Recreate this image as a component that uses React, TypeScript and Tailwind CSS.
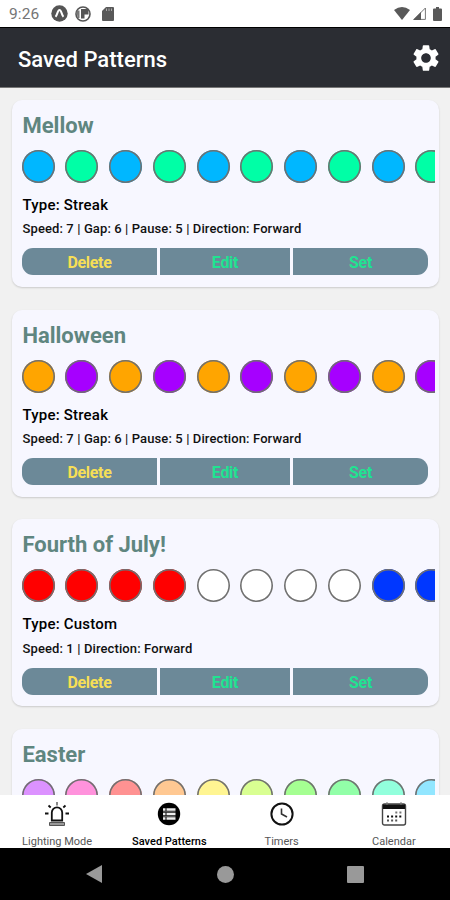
import clsx from 'clsx'
import { MdSettings } from 'react-icons/md'

interface Pattern {
  name: string
  type?: string
  details?: string
  colors: string[]
}

const patterns: Pattern[] = [
  {
    name: 'Mellow',
    type: 'Streak',
    details: 'Speed: 7 | Gap: 6 | Pause: 5 | Direction: Forward',
    colors: ['#00b7ff', '#00ffa6', '#00b7ff', '#00ffa6', '#00b7ff', '#00ffa6', '#00b7ff', '#00ffa6', '#00b7ff', '#00ffa6'],
  },
  {
    name: 'Halloween',
    type: 'Streak',
    details: 'Speed: 7 | Gap: 6 | Pause: 5 | Direction: Forward',
    colors: ['#ffa500', '#a600ff', '#ffa500', '#a600ff', '#ffa500', '#a600ff', '#ffa500', '#a600ff', '#ffa500', '#a600ff'],
  },
  {
    name: 'Fourth of July!',
    type: 'Custom',
    details: 'Speed: 1 | Direction: Forward',
    colors: ['#ff0000', '#ff0000', '#ff0000', '#ff0000', '#ffffff', '#ffffff', '#ffffff', '#ffffff', '#0037ff', '#0037ff'],
  },
  {
    name: 'Easter',
    colors: ['#dc92ff', '#ff92dc', '#ff9292', '#ffc892', '#fff592', '#d9ff92', '#a5ff92', '#92ffa8', '#92ffdc', '#92e6ff'],
  },
]

function StatusBar() {
  return (
    <div className="flex h-[27px] shrink-0 items-center bg-white pl-[9px] pr-2 text-[#5c5c5c]">
      <span className="w-[42px] pt-px text-[15.5px] leading-[27px] tracking-[0.1px] text-[#757575]">9:26</span>
      <svg className="h-[17px] w-[17px]" viewBox="0 0 17 17">
        <circle cx="8.5" cy="8.5" r="8.2" fill="#555" />
        <path d="M4.5 11.8c1.8-1.5 2-6.8 4-6.8s2.2 5.3 4 6.8" fill="none" stroke="#fff" strokeWidth="2" />
      </svg>
      <svg className="ml-[7px] h-4 w-4" viewBox="0 0 16 16">
        <circle cx="8" cy="8" r="7" fill="none" stroke="#555" strokeWidth="1.6" />
        <path d="M6 3h7.500v5.500H9.500v4H6z" fill="#555" />
        <path d="M1.500 4.500h3v7.500H2.500z" fill="#777" />
      </svg>
      <svg className="ml-[11px] h-[14px] w-[12px]" viewBox="0 0 12 14">
        <path d="M4 0h7q1 0 1 1v12q0 1-1 1H1q-1 0-1-1V4z" fill="#595959" />
        <path d="M4.5 1.5V4M7 1.5V4M9.5 1.5V4" stroke="#aaa" strokeWidth="1" />
      </svg>
      <svg className="ml-auto h-[13px] w-[16px]" viewBox="0 0 16 13">
        <path d="M0 3Q8-3 16 3L8 13z" fill="#595959" />
      </svg>
      <svg className="ml-[3px] h-[13px] w-[13px]" viewBox="0 0 13 13">
        <path d="M12.4 1v11.4H1z" fill="#fff" stroke="#777" />
        <path d="M8 5v8H0z" fill="#595959" />
      </svg>
      <svg className="ml-[7px] h-[14px] w-[9px]" viewBox="0 0 9 14">
        <path d="M3 0h3v1.5h2q1 0 1 1V13q0 1-1 1H1q-1 0-1-1V2.5q0-1 1-1h2z" fill="#595959" />
      </svg>
    </div>
  )
}

function PatternCard({ pattern }: { pattern: Pattern }) {
  return (
    <div className="h-[187px] shrink-0 rounded-[10px] bg-[#f7f7ff] pl-[11px] pt-[12px] shadow-[0_1px_2px_rgba(0,0,0,0.16)]">
      <h2 className="h-[28px] text-[22px] font-bold leading-[28px] tracking-[-0.02px] text-[#5f8680]">{pattern.name}</h2>
      <div className="-ml-px mr-1 mt-[10px] flex gap-[10.75px] overflow-hidden">
        {pattern.colors.map((color, i) => (
          <div
            key={i}
            className="h-[33px] w-[33px] shrink-0 rounded-full shadow-[inset_0_0_0_1.6px_#707070]"
            style={{ backgroundColor: color }}
          />
        ))}
      </div>
      {pattern.type && (
        <>
          <p className="mt-[12px] h-[20px] text-[15px] font-medium leading-[20px] tracking-[0.2px] text-black">
            Type: {pattern.type}
          </p>
          <p className="mt-[6.5px] h-[16px] text-[13px] font-medium leading-[16px] tracking-[0.11px] text-[#111]">
            {pattern.details}
          </p>
          <div className="-ml-[0.5px] mr-[10.5px] mt-[11px] flex h-[27px] gap-[3px] overflow-hidden rounded-[11px] text-[16px] font-bold tracking-[-0.3px]">
            <button className="flex-[135] bg-[#6c8998] pt-[3px] text-[#f6df56]">Delete</button>
            <button className="flex-[130] bg-[#6c8998] pt-[3px] text-[#20e391]">Edit</button>
            <button className="flex-[135] bg-[#6c8998] pt-[3px] text-[#20e391]">Set</button>
          </div>
        </>
      )}
    </div>
  )
}

function AlarmLightIcon() {
  return (
    <svg className="h-6 w-6" viewBox="0 0 24 24" fill="none" stroke="#111">
      <path d="M6.8 18.500v-8a5.200 5.200 0 0 1 10.400 0v8z" strokeWidth="1.800" />
      <path d="M4.500 20.500h15v3h-15z" fill="#999" stroke="#555" strokeWidth="1" />
      <path d="M12 0v3.500" stroke="#888" strokeWidth="2" />
      <path d="m3.500 3.500 2.200 2M20.500 3.500l-2.200 2M0 11.500h3.500M20.500 11.500H24" strokeWidth="1.800" />
    </svg>
  )
}

function ListCircleIcon() {
  return (
    <svg className="h-6 w-6" viewBox="0 0 24 24">
      <circle cx="12" cy="12" r="11.2" fill="#000" />
      <path d="M6 7.500h2.500M6 12h2.500M6 16.500h2.500M9.500 7.500h9M9.500 12h9M9.500 16.500h9" stroke="#eee" strokeWidth="2.600" />
      <path d="M6 9.800h12.500M6 14.300h12.500" stroke="#777" strokeWidth="1" />
    </svg>
  )
}

function ClockIcon() {
  return (
    <svg className="h-6 w-6" viewBox="0 0 24 24" fill="none" stroke="#111">
      <circle cx="12" cy="12" r="10.6" strokeWidth="2" />
      <path d="M11.5 6.500v5.500l5.500 3" strokeWidth="1.600" stroke="#333" />
    </svg>
  )
}

function CalendarIcon() {
  return (
    <svg className="h-6 w-[26px]" viewBox="0 0 26 24" fill="none">
      <rect x="1.5" y="2" width="23" height="21" rx="2" stroke="#444" strokeWidth="1.4" />
      <path d="M2 2.500h22v4.500H2z" fill="#111" />
      <path d="M6 .5v2M20 .5v2" stroke="#777" strokeWidth="2" />
      <path d="M14.300 10.500h6.200" stroke="#777" strokeWidth="2" strokeDasharray="2 2.100" />
      <path d="M6 14.500h15" stroke="#111" strokeWidth="2" strokeDasharray="2 2.100" />
      <path d="M6 18.500h11" stroke="#555" strokeWidth="2" strokeDasharray="2 2.100" />
    </svg>
  )
}

const tabs = [
  { label: 'Lighting Mode', icon: AlarmLightIcon },
  { label: 'Saved Patterns', icon: ListCircleIcon, active: true },
  { label: 'Timers', icon: ClockIcon },
  { label: 'Calendar', icon: CalendarIcon },
]

export default function App() {
  return (
    <div className="flex h-[900px] w-[450px] flex-col overflow-hidden bg-[#f1f1f1] font-['Roboto',sans-serif]">
      <StatusBar />

      <header className="flex h-[61px] shrink-0 items-center justify-between border-b border-t border-b-[#777] border-t-black bg-[#2b2d33] pl-[18px] pr-2">
        <h1 className="pt-[3px] text-[22px] font-medium text-white">Saved Patterns</h1>
        <MdSettings size={32} className="text-white" />
      </header>

      <main className="flex min-h-0 flex-1 flex-col gap-[22.7px] overflow-hidden px-[11.5px] pt-[11.9px]">
        {patterns.map((pattern) => (
          <PatternCard key={pattern.name} pattern={pattern} />
        ))}
      </main>

      {/* Tab bar */}
      <nav className="grid h-[53px] shrink-0 grid-cols-4 bg-white pl-px">
        {tabs.map(({ label, icon: Icon, active }) => (
          <div key={label} className="flex flex-col items-center pt-[7px]">
            <Icon />
            <span
              className={clsx(
                'mt-[9px] whitespace-nowrap text-[11px] leading-[13px]',
                active ? 'font-medium text-black' : 'text-[#555]'
              )}
            >
              {label}
            </span>
          </div>
        ))}
      </nav>

      {/* Android navigation */}
      <div className="flex h-[52px] shrink-0 items-center justify-between bg-black px-[86px]">
        <svg className="h-[18px] w-[17px]" viewBox="0 0 17 18">
          <path d="M16 0v18L0 9z" fill="#999" />
        </svg>
        <div className="h-[17px] w-[17px] rounded-full bg-[#999]" />
        <div className="h-[17px] w-[17px] rounded-[1px] bg-[#999]" />
      </div>
    </div>
  )
}
